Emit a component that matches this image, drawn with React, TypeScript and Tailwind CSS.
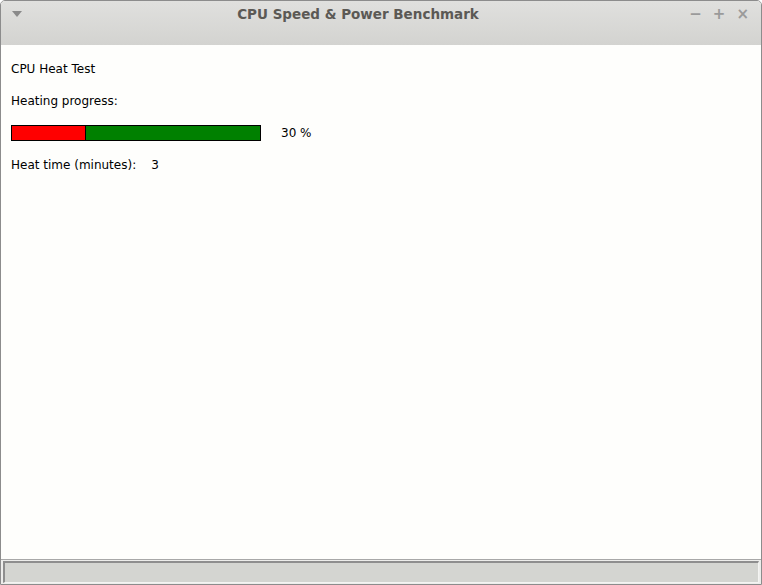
import React from 'react';

const progress = 30;

const App: React.FC = () => {
  return (
    <div className="w-[762px] h-[585px] flex flex-col bg-[#fefefc] border border-[#8c8c8c] rounded-t-[5px] overflow-hidden font-['DejaVu_Sans',sans-serif] text-[12px] text-black">
      {/* title bar */}
      <div className="h-[44px] shrink-0 flex items-start bg-gradient-to-b from-[#e0e0de] to-[#d3d3d0] relative">
        <div className="absolute left-[11px] top-[10px] w-0 h-0 border-l-[5px] border-r-[5px] border-t-[6px] border-l-transparent border-r-transparent border-t-[#8a8a8a]" />
        <div className="w-full text-center pt-[4px] pr-[46px] text-[13.5px] font-bold text-[#5b5955] leading-[18px]">
          CPU Speed &amp; Power Benchmark
        </div>
        <div className="absolute right-[12px] top-[4px] flex gap-[11px] text-[#9a9a9a] text-[15px] font-bold leading-[18px]">
          <span>−</span>
          <span>+</span>
          <span>×</span>
        </div>
      </div>

      {/* content */}
      <div className="flex-1 flex flex-col pt-[8px] px-[10px]">
        <div className="h-[32px] flex items-center">CPU Heat Test</div>
        <div className="h-[32px] flex items-center">Heating progress:</div>
        <div className="h-[32px] flex items-center">
          <div className="w-[250px] h-[16px] border border-black bg-[#008000] flex">
            <div className="h-full bg-[#ff0000] border-r border-black" style={{ width: `${progress}%` }} />
          </div>
          <span className="ml-[20px]">{progress} %</span>
        </div>
        <div className="h-[32px] flex items-center">
          <span>Heat time (minutes):</span>
          <span className="ml-[15px]">3</span>
        </div>
      </div>

      {/* status bar */}
      <div className="h-[25px] shrink-0 border-t border-[#a8a8a8] pt-[1px] px-[2px] pb-[1px] bg-[#ededeb]">
        <div className="h-full border-t-2 border-l-2 border-[#8e8e8e] border-b border-r border-b-[#f4f4f2] border-r-[#f4f4f2] bg-[#d4d5d1]" />
      </div>
    </div>
  );
};

export default App;
